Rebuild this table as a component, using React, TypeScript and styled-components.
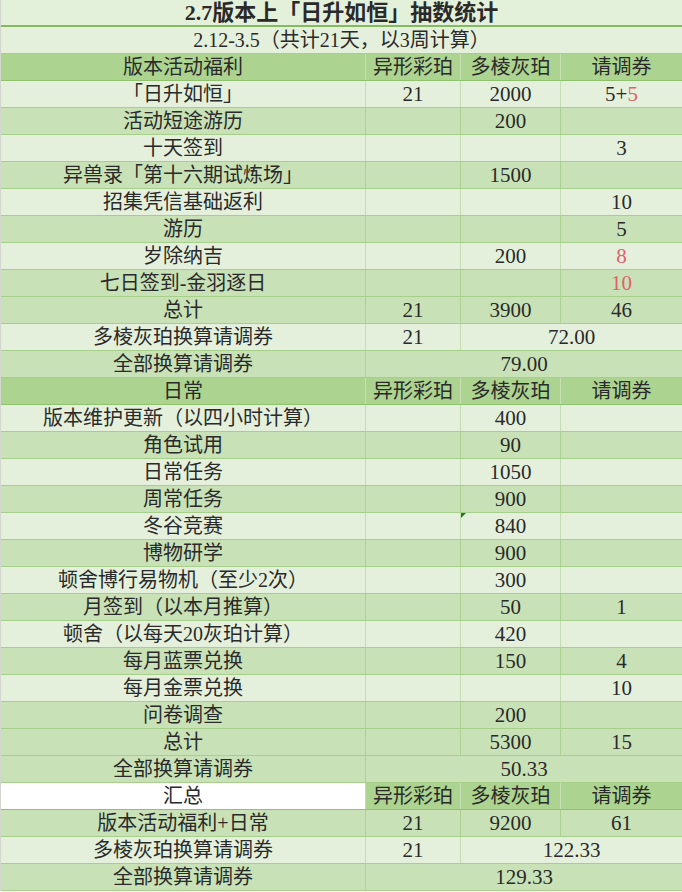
import React from 'react';
import styled, { createGlobalStyle } from 'styled-components';

type Tone = 'title' | 'light' | 'mid' | 'head';

type CellData = {
  text?: React.ReactNode;
  span?: number;
  bg?: string;
  marker?: boolean;
};

type RowData = {
  tone: Tone;
  cells: CellData[];
};

const GlobalStyle = createGlobalStyle`
  html, body {
    margin: 0;
    padding: 0;
    background: #ffffff;
  }
`;

const toneBg: Record<Tone, string> = {
  title: '#e3f0da',
  light: '#e4f0db',
  mid: '#c8e1b6',
  head: '#acd38f',
};

const toneLine: Record<Tone, string> = {
  title: '#c8e1b6',
  light: '#c3deb0',
  mid: '#acd292',
  head: '#c6e0b4',
};

const Sheet = styled.div`
  width: 682px;
  box-sizing: border-box;
  border-left: 1px solid #d2d6cf;
  font-family: 'Liberation Serif', 'Noto Sans CJK SC', serif;
  color: #2a2a2a;
`;

const Row = styled.div<{ $tone: Tone }>`
  display: grid;
  grid-template-columns: 364px 95px 100px 1fr;
  height: 27px;
  box-sizing: border-box;
  background: ${(p) => toneBg[p.$tone]};
  border-bottom: ${(p) =>
    p.$tone === 'title'
      ? '2px solid #84bb60'
      : p.$tone === 'head'
      ? '1px solid #8fc26d'
      : '1px solid #a6cf8b'};
`;

const Cell = styled.div<{ $tone: Tone; $span: number; $first: boolean; $bg?: string }>`
  position: relative;
  grid-column: span ${(p) => p.$span};
  text-align: center;
  line-height: ${(p) => (p.$tone === 'title' ? '25px' : '25px')};
  padding-top: ${(p) => (p.$tone === 'title' ? '0' : '1px')};
  box-sizing: border-box;
  white-space: nowrap;
  font-size: ${(p) => (p.$tone === 'title' ? '22px' : '20px')};
  font-weight: ${(p) => (p.$tone === 'title' ? 700 : 400)};
  background: ${(p) => p.$bg ?? 'transparent'};
  border-left: ${(p) => (p.$first ? 'none' : `1px solid ${toneLine[p.$tone]}`)};
`;

const Num = styled.span`
  font-size: 21px;
`;

const Marker = styled.span`
  position: absolute;
  top: 0;
  left: 0;
  width: 0;
  height: 0;
  border-top: 5px solid #1f7a1f;
  border-right: 5px solid transparent;
`;

const Red = styled.span`
  color: #e0606a;
`;

const H = ['异形彩珀', '多棱灰珀', '请调券'];

const wrap = (t: React.ReactNode): React.ReactNode =>
  typeof t === 'string' && /^[\d.+]+$/.test(t) ? <Num>{t}</Num> : t;

const r = (tone: Tone, ...cells: (React.ReactNode | CellData)[]): RowData => ({
  tone,
  cells: cells.map((c) =>
    c !== null && typeof c === 'object' && !React.isValidElement(c)
      ? { ...(c as CellData), text: wrap((c as CellData).text) }
      : { text: wrap(c as React.ReactNode) }
  ),
});

const rows: RowData[] = [
  r('title', { text: '2.7版本上「日升如恒」抽数统计', span: 4 }),
  r('light', { text: '2.12-3.5（共计21天，以3周计算）', span: 4 }),
  r('head', '版本活动福利', ...H),
  r('light', '「日升如恒」', '21', '2000', <Num>5+<Red>5</Red></Num>),
  r('mid', '活动短途游历', '', '200', ''),
  r('light', '十天签到', '', '', '3'),
  r('mid', '异兽录「第十六期试炼场」', '', '1500', ''),
  r('light', '招集凭信基础返利', '', '', '10'),
  r('mid', '游历', '', '', '5'),
  r('light', '岁除纳吉', '', '200', <Num><Red>8</Red></Num>),
  r('mid', '七日签到-金羽逐日', '', '', <Num><Red>10</Red></Num>),
  r('mid', '总计', '21', '3900', '46'),
  r('light', '多棱灰珀换算请调券', '21', { text: '72.00', span: 2 }),
  r('mid', '全部换算请调券', { text: '79.00', span: 3 }),
  r('head', '日常', ...H),
  r('light', '版本维护更新（以四小时计算）', '', '400', ''),
  r('mid', '角色试用', '', '90', ''),
  r('light', '日常任务', '', '1050', ''),
  r('mid', '周常任务', '', '900', ''),
  r('light', '冬谷竞赛', '', { text: '840', marker: true }, ''),
  r('mid', '博物研学', '', '900', ''),
  r('light', '顿舍博行易物机（至少2次）', '', '300', ''),
  r('mid', '月签到（以本月推算）', '', '50', '1'),
  r('light', '顿舍（以每天20灰珀计算）', '', '420', ''),
  r('mid', '每月蓝票兑换', '', '150', '4'),
  r('light', '每月金票兑换', '', '', '10'),
  r('mid', '问卷调查', '', '200', ''),
  r('mid', '总计', '', '5300', '15'),
  r('mid', '全部换算请调券', { text: '50.33', span: 3 }),
  r('head', { text: '汇总', bg: '#ffffff' }, ...H),
  r('mid', '版本活动福利+日常', '21', '9200', '61'),
  r('light', '多棱灰珀换算请调券', '21', { text: '122.33', span: 2 }),
  r('mid', '全部换算请调券', { text: '129.33', span: 3 }),
];

const App = (): JSX.Element => {
  return (
    <>
      <GlobalStyle />
      <Sheet>
        {rows.map((row, i) => (
          <Row key={i} $tone={row.tone}>
            {row.cells.map((cell, j) => (
              <Cell
                key={j}
                $tone={row.tone}
                $span={cell.span ?? 1}
                $first={j === 0}
                $bg={cell.bg}
              >
                {cell.marker && <Marker />}
                {cell.text}
              </Cell>
            ))}
          </Row>
        ))}
      </Sheet>
    </>
  );
};

export default App;
